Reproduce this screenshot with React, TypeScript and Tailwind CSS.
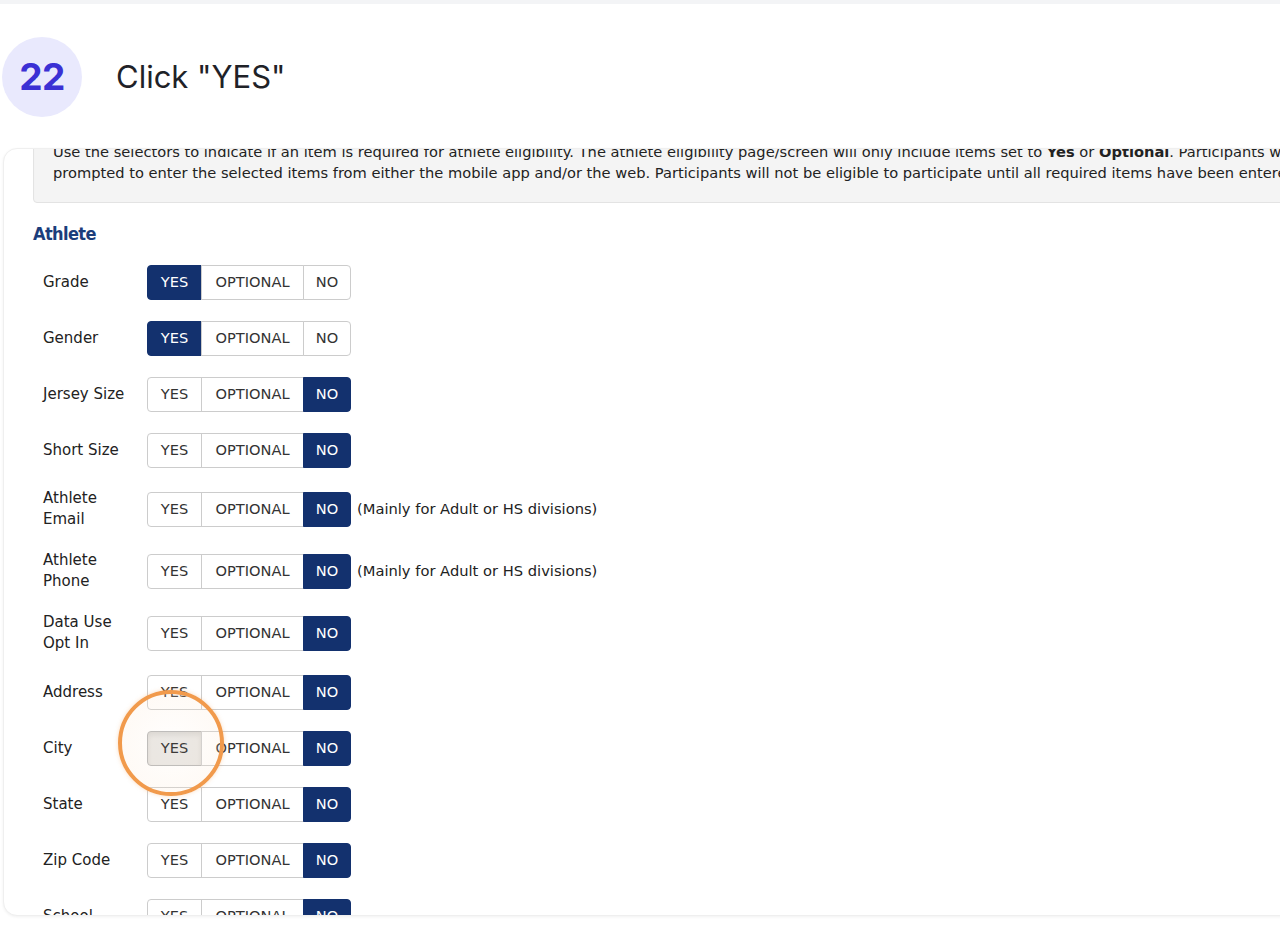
import React from "react";

type Choice = "yes" | "optional" | "no";

interface Field {
  label: string[];
  value: Choice;
  note?: string;
  pressed?: boolean;
}

const FIELDS: Field[] = [
  { label: ["Grade"], value: "yes" },
  { label: ["Gender"], value: "yes" },
  { label: ["Jersey Size"], value: "no" },
  { label: ["Short Size"], value: "no" },
  { label: ["Athlete", "Email"], value: "no", note: "(Mainly for Adult or HS divisions)" },
  { label: ["Athlete", "Phone"], value: "no", note: "(Mainly for Adult or HS divisions)" },
  { label: ["Data Use", "Opt In"], value: "no" },
  { label: ["Address"], value: "no" },
  { label: ["City"], value: "no", pressed: true },
  { label: ["State"], value: "no" },
  { label: ["Zip Code"], value: "no" },
  { label: ["School"], value: "no" },
];

function Segment({ text, active, pressed, width, first, last }: { text: string; active: boolean; pressed?: boolean; width: string; first?: boolean; last?: boolean }) {
  let look = "bg-white text-[#333333] border-[#cccccc]";
  if (active) look = "bg-[#13316e] text-white border-[#13316e]";
  if (pressed) look = "bg-[#e8e6e3] text-[#222222] border-[#b5b5b5] shadow-[inset_0_3px_5px_rgba(0,0,0,0.08)]";
  return (
    <div
      className={`${width} h-full flex items-center justify-center border ${look} ${first ? "rounded-l-[4px]" : "-ml-px"} ${last ? "rounded-r-[4px]" : ""}`}
    >
      {text}
    </div>
  );
}

function Selector({ value, pressed }: { value: Choice; pressed?: boolean }) {
  return (
    <div className="flex h-[35px] text-[14.6px] shrink-0">
      <Segment text="YES" width="w-[55px]" active={value === "yes"} pressed={pressed} first />
      <Segment text="OPTIONAL" width="w-[103px]" active={value === "optional"} />
      <Segment text="NO" width="w-[48px]" active={value === "no"} last />
    </div>
  );
}

export default function App() {
  return (
    <div className="w-[1280px] h-[926px] overflow-hidden bg-white relative" style={{ fontFamily: "Inter, sans-serif" }}>
      {/* top strip */}
      <div className="h-[4px] bg-[#f3f4f6]" />

      {/* step header */}
      <div className="flex items-center pt-[33px] pl-[2px]">
        <div className="w-[80px] h-[80px] rounded-full bg-[#e9e9fd] flex items-center justify-center">
          <span className="text-[#3b30d4] text-[37px] font-bold tracking-[-0.5px]">22</span>
        </div>
        <span className="ml-[34px] text-[31px] text-[#1f2228] font-normal">Click "YES"</span>
      </div>

      {/* screenshot card */}
      <div
        className="relative mt-[31px] ml-[3px] w-[1330px] h-[768px] rounded-[14px] border border-[#efefef] shadow-[0_1px_3px_rgba(0,0,0,0.06)] overflow-hidden bg-white"
        style={{ fontFamily: "'DejaVu Sans', Verdana, sans-serif" }}
      >
        <div className="-mt-[28px] px-[29px] text-[#222222]">
          <div className="border border-[#e3e3e3] bg-[#f4f4f4] rounded-[4px] p-[19px] text-[14.65px] leading-[21px] whitespace-nowrap shadow-[inset_0_1px_1px_rgba(0,0,0,0.04)]">
            Use the selectors to indicate if an item is required for athlete eligibility. The athlete eligibility page/screen will only include items set to <b>Yes</b> or <b>Optional</b>. Participants will be
            <br />
            prompted to enter the selected items from either the mobile app and/or the web. Participants will not be eligible to participate until all required items have been entered.
          </div>

          <div className="mt-[21px] text-[18px] leading-[20px] font-bold text-[#1b3d7b] tracking-[-0.6px]" style={{ fontStretch: "condensed" }}>
            Athlete
          </div>

          <div className="mt-[10px] pl-[10px]">
            {FIELDS.map((f, idx) => (
              <div key={idx} className={`flex items-center ${f.label.length > 1 ? "h-[62px]" : "h-[56px]"}`}>
                <div className="w-[104px] text-[15px] leading-[21px] text-[#222222]">
                  {f.label.map((l, i) => (
                    <div key={i}>{l}</div>
                  ))}
                </div>
                <Selector value={f.value} pressed={f.pressed} />
                {f.note && <span className="ml-[6px] text-[14.7px] text-[#222222]">{f.note}</span>}
              </div>
            ))}
          </div>
        </div>

        {/* click highlight */}
        <div className="absolute left-[114px] top-[541px] w-[106px] h-[106px] rounded-full border-[4px] border-[#f19a4c] bg-[radial-gradient(circle,rgba(255,246,238,0.1)_0%,rgba(252,226,200,0.22)_100%)] shadow-[0_0_4px_rgba(241,154,76,0.35)]" />
      </div>
    </div>
  );
}
